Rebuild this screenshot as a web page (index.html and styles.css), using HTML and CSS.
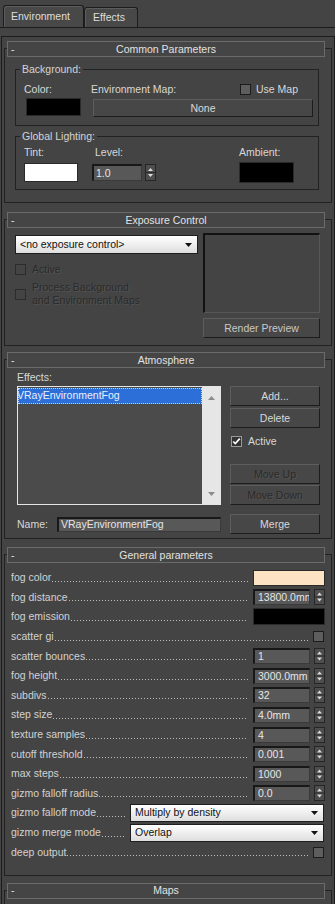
FILE: index.html
```html
<!DOCTYPE html>
<html lang="en">
<head>
<meta charset="utf-8">
<title>Environment and Effects</title>
<link rel="stylesheet" href="styles.css">
</head>
<body>
<div class="tabs">
  <div class="tab tab-env">Environment</div>
  <div class="tab tab-fx">Effects</div>
</div>
<div class="pane">

<section class="rollout ro-common">
  <div class="rhead"><span class="minus">-</span><span class="rtitle">Common Parameters</span></div>
  <div class="group g-bg">
    <div class="legend">Background:</div>
    <div class="bg-row1">
      <span class="lbl-color">Color:</span>
      <span class="lbl-env">Environment Map:</span>
      <span class="cb"></span><span class="lbl-use">Use Map</span>
    </div>
    <div class="bg-row2">
      <div class="swatch sw-black sw-bgcolor"></div>
      <div class="btn btn-none">None</div>
    </div>
  </div>
  <div class="group g-gl">
    <div class="legend">Global Lighting:</div>
    <div class="gl-row">
      <div class="gl-col gl-tint"><span class="gl-lbl">Tint:</span><div class="swatch sw-white"></div></div>
      <div class="gl-col gl-level"><span class="gl-lbl lbl-level">Level:</span>
        <div class="spinner sp-level"><div class="field">1.0</div>
          <svg class="arr" viewBox="0 0 11 17" width="11" height="17"><rect x="0.5" y="0.5" width="10" height="16" fill="#4e4e4e" stroke="#262626"/><path d="M3 7L5.5 4L8 7Z M3 10L5.5 13L8 10Z" fill="#dadada"/><path d="M1 8.5h9" stroke="#2a2a2a"/></svg>
        </div>
      </div>
      <div class="gl-col gl-amb"><span class="gl-lbl">Ambient:</span><div class="swatch sw-black sw-amb"></div></div>
    </div>
  </div>
</section>

<section class="rollout ro-exp">
  <div class="rhead"><span class="minus">-</span><span class="rtitle">Exposure Control</span></div>
  <div class="exp-body">
    <div class="exp-left">
      <div class="dropdown dd-exp"><span>&lt;no exposure control&gt;</span><svg width="7" height="4" viewBox="0 0 7 4"><path d="M0 0h7L3.5 4z" fill="#111"/></svg></div>
      <div class="chk-row exp-active"><span class="cb cb-dis"></span><span class="dis">Active</span></div>
      <div class="chk-row exp-proc"><span class="cb cb-dis"></span><span class="dis">Process Background<br>and Environment Maps</span></div>
    </div>
    <div class="exp-right">
      <div class="preview"></div>
      <div class="btn btn-render">Render Preview</div>
    </div>
  </div>
</section>

<section class="rollout ro-atm">
  <div class="rhead"><span class="minus">-</span><span class="rtitle">Atmosphere</span></div>
  <div class="atm-top">
    <div class="atm-left">
      <div class="lbl-effects">Effects:</div>
      <div class="listbox">
        <div class="list-items"><div class="sel">VRayEnvironmentFog</div></div>
        <div class="scroll">
          <svg width="7" height="4" viewBox="0 0 7 4"><path d="M0 4h7L3.5 0z" fill="#8c8c8c"/></svg>
          <svg width="7" height="4" viewBox="0 0 7 4"><path d="M0 0h7L3.5 4z" fill="#8c8c8c"/></svg>
        </div>
      </div>
    </div>
    <div class="atm-right">
      <div class="btn btn-add">Add...</div>
      <div class="btn btn-del">Delete</div>
      <div class="chk-row atm-active"><span class="cb cb-on"><svg viewBox="0 0 11 11" width="9" height="9"><path d="M1.5 5.5l2.5 2.5L9.5 2" stroke="#fff" stroke-width="2" fill="none"/></svg></span><span>Active</span></div>
      <div class="btn dis btn-up">Move Up</div>
      <div class="btn dis btn-down">Move Down</div>
    </div>
  </div>
  <div class="atm-name">
    <span class="lbl-name">Name:</span>
    <div class="field fld-name">VRayEnvironmentFog</div>
    <div class="btn btn-merge">Merge</div>
  </div>
</section>

<section class="rollout ro-gen">
  <div class="rhead"><span class="minus">-</span><span class="rtitle">General parameters</span></div>
  <div class="prows">
    <div class="prow"><span>fog color</span><span class="dots"></span><div class="swatch sw-fog"></div></div>
    <div class="prow"><span>fog distance</span><span class="dots"></span>
      <div class="spinner sp-gen"><div class="field">13800.0mm</div><svg class="arr" viewBox="0 0 11 16" width="11" height="16"><rect x="0.5" y="0.5" width="10" height="15" fill="#4e4e4e" stroke="#262626"/><path d="M3 6.5L5.5 3.5L8 6.5Z M3 9.5L5.5 12.5L8 9.5Z" fill="#dadada"/><path d="M1 8h9" stroke="#2a2a2a"/></svg></div></div>
    <div class="prow"><span>fog emission</span><span class="dots"></span><div class="swatch sw-black sw-emis"></div></div>
    <div class="prow"><span>scatter gi</span><span class="dots"></span><span class="cb cb-gen"></span></div>
    <div class="prow"><span>scatter bounces</span><span class="dots"></span>
      <div class="spinner sp-gen"><div class="field">1</div><svg class="arr" viewBox="0 0 11 16" width="11" height="16"><rect x="0.5" y="0.5" width="10" height="15" fill="#4e4e4e" stroke="#262626"/><path d="M3 6.5L5.5 3.5L8 6.5Z M3 9.5L5.5 12.5L8 9.5Z" fill="#dadada"/><path d="M1 8h9" stroke="#2a2a2a"/></svg></div></div>
    <div class="prow"><span>fog height</span><span class="dots"></span>
      <div class="spinner sp-gen"><div class="field">3000.0mm</div><svg class="arr" viewBox="0 0 11 16" width="11" height="16"><rect x="0.5" y="0.5" width="10" height="15" fill="#4e4e4e" stroke="#262626"/><path d="M3 6.5L5.5 3.5L8 6.5Z M3 9.5L5.5 12.5L8 9.5Z" fill="#dadada"/><path d="M1 8h9" stroke="#2a2a2a"/></svg></div></div>
    <div class="prow"><span>subdivs</span><span class="dots"></span>
      <div class="spinner sp-gen"><div class="field">32</div><svg class="arr" viewBox="0 0 11 16" width="11" height="16"><rect x="0.5" y="0.5" width="10" height="15" fill="#4e4e4e" stroke="#262626"/><path d="M3 6.5L5.5 3.5L8 6.5Z M3 9.5L5.5 12.5L8 9.5Z" fill="#dadada"/><path d="M1 8h9" stroke="#2a2a2a"/></svg></div></div>
    <div class="prow"><span>step size</span><span class="dots"></span>
      <div class="spinner sp-gen"><div class="field">4.0mm</div><svg class="arr" viewBox="0 0 11 16" width="11" height="16"><rect x="0.5" y="0.5" width="10" height="15" fill="#4e4e4e" stroke="#262626"/><path d="M3 6.5L5.5 3.5L8 6.5Z M3 9.5L5.5 12.5L8 9.5Z" fill="#dadada"/><path d="M1 8h9" stroke="#2a2a2a"/></svg></div></div>
    <div class="prow"><span>texture samples</span><span class="dots"></span>
      <div class="spinner sp-gen"><div class="field">4</div><svg class="arr" viewBox="0 0 11 16" width="11" height="16"><rect x="0.5" y="0.5" width="10" height="15" fill="#4e4e4e" stroke="#262626"/><path d="M3 6.5L5.5 3.5L8 6.5Z M3 9.5L5.5 12.5L8 9.5Z" fill="#dadada"/><path d="M1 8h9" stroke="#2a2a2a"/></svg></div></div>
    <div class="prow"><span>cutoff threshold</span><span class="dots"></span>
      <div class="spinner sp-gen"><div class="field">0.001</div><svg class="arr" viewBox="0 0 11 16" width="11" height="16"><rect x="0.5" y="0.5" width="10" height="15" fill="#4e4e4e" stroke="#262626"/><path d="M3 6.5L5.5 3.5L8 6.5Z M3 9.5L5.5 12.5L8 9.5Z" fill="#dadada"/><path d="M1 8h9" stroke="#2a2a2a"/></svg></div></div>
    <div class="prow"><span>max steps</span><span class="dots"></span>
      <div class="spinner sp-gen"><div class="field">1000</div><svg class="arr" viewBox="0 0 11 16" width="11" height="16"><rect x="0.5" y="0.5" width="10" height="15" fill="#4e4e4e" stroke="#262626"/><path d="M3 6.5L5.5 3.5L8 6.5Z M3 9.5L5.5 12.5L8 9.5Z" fill="#dadada"/><path d="M1 8h9" stroke="#2a2a2a"/></svg></div></div>
    <div class="prow"><span>gizmo falloff radius</span><span class="dots"></span>
      <div class="spinner sp-gen"><div class="field">0.0</div><svg class="arr" viewBox="0 0 11 16" width="11" height="16"><rect x="0.5" y="0.5" width="10" height="15" fill="#4e4e4e" stroke="#262626"/><path d="M3 6.5L5.5 3.5L8 6.5Z M3 9.5L5.5 12.5L8 9.5Z" fill="#dadada"/><path d="M1 8h9" stroke="#2a2a2a"/></svg></div></div>
    <div class="prow"><span>gizmo falloff mode</span><span class="dots"></span>
      <div class="dropdown dd-gen"><span>Multiply by density</span><svg width="7" height="4" viewBox="0 0 7 4"><path d="M0 0h7L3.5 4z" fill="#111"/></svg></div></div>
    <div class="prow"><span>gizmo merge mode</span><span class="dots"></span>
      <div class="dropdown dd-gen"><span>Overlap</span><svg width="7" height="4" viewBox="0 0 7 4"><path d="M0 0h7L3.5 4z" fill="#111"/></svg></div></div>
    <div class="prow"><span>deep output</span><span class="dots"></span><span class="cb cb-gen"></span></div>
  </div>
</section>

<section class="rollout ro-maps">
  <div class="rhead"><span class="minus">-</span><span class="rtitle">Maps</span></div>
  <div class="maps-body"></div>
</section>

</div>
</body>
</html>
```
FILE: styles.css
```css
* { box-sizing: border-box; }
html, body { margin: 0; padding: 0; }
body {
  width: 335px;
  height: 904px;
  overflow: hidden;
  background: #444444;
  font-family: "Liberation Sans", Arial, sans-serif;
  font-size: 10.5px;
  line-height: 13px;
  color: #d8d8d8;
}

/* tabs */
.tabs {
  display: flex;
  align-items: flex-end;
  height: 28px;
  padding-left: 3px;
  border-bottom: 1px solid #1c1c1c;
}
.tab {
  display: flex;
  align-items: center;
  border: 1px solid #1c1c1c;
  border-bottom: 0;
  border-radius: 3px 3px 0 0;
  background: #484848;
  box-shadow: inset 1px 1px 0 #5c5c5c;
  color: #dedede;
}
.tab-env { width: 81px; height: 22px; padding-left: 7px; }
.tab-fx { width: 54px; height: 20px; padding-left: 8px; }

.pane {
  margin: 8px 0 0 1px;
  border-top: 1px solid #1c1c1c;
  border-left: 1px solid #1c1c1c;
  border-right: 1px solid #1c1c1c;
  height: 900px;
}

/* rollouts */
.rollout {
  width: 328px;
  margin-left: 2px;
  border: 1px solid #222222;
}
.ro-common { margin-top: 11px; padding-bottom: 12px; }
.ro-exp { margin-top: 16px; padding-bottom: 7px; }
.ro-atm { margin-top: 13px; padding-bottom: 4px; }
.ro-gen { margin-top: 15px; padding-bottom: 13px; }
.ro-maps { margin-top: 14px; }
.maps-body { height: 20px; }

.rhead {
  display: grid;
  margin: -8px 0 0 2px;
  width: 318px;
  height: 16px;
  border: 1px solid #6b6b6b;
  background: #454545;
  color: #e2e2e2;
}
.rhead > span { grid-area: 1 / 1; align-self: center; }
.minus { justify-self: start; padding-left: 3px; }
.rtitle { justify-self: center; }

/* group boxes */
.group {
  border: 1px solid #222222;
  margin: 0 12px 0 10px;
}
.legend {
  display: table;
  margin: -7px 0 0 4px;
  padding: 0 2px;
  background: #444444;
  line-height: 13px;
  color: #d4d4d4;
}
.g-bg { margin-top: 12px; padding-bottom: 8px; }
.g-gl { margin-top: 10px; padding-bottom: 6px; }

.bg-row1 {
  display: flex;
  align-items: center;
  height: 18px;
  margin-top: 4px;
  padding-left: 8px;
}
.lbl-color { width: 67px; }
.lbl-env { width: 149px; }
.lbl-use { margin-left: 5px; }
.bg-row2 {
  display: flex;
  align-items: flex-start;
  height: 19px;
  padding-left: 10px;
}

.swatch { flex: none; border: 1px solid #2a2a2a; }
.sw-black { background: #000000; }
.sw-white { background: #ffffff; }
.sw-bgcolor { width: 55px; height: 18px; }
.btn-none { width: 220px; height: 18px; margin: 1px 0 0 12px; }

.gl-row { display: flex; margin-top: 3px; padding-left: 8px; }
.gl-col { display: flex; flex-direction: column; }
.gl-tint { width: 54px; }
.gl-tint .swatch { width: 54px; height: 19px; margin-top: 4px; }
.gl-level { margin-left: 14px; }
.lbl-level { padding-left: 3px; }
.sp-level { margin-top: 5px; }
.sp-level .field { width: 50px; height: 17px; }
.gl-amb { margin-left: 83px; }
.sw-amb { width: 55px; height: 21px; margin-top: 3px; }

/* controls */
.btn {
  display: flex;
  align-items: center;
  justify-content: center;
  background: #474747;
  border: 1px solid;
  border-color: #5d5d5d #1c1c1c #1c1c1c #5d5d5d;
  color: #d8d8d8;
}
.dis { color: #2b2b2b; text-shadow: 1px 1px 0 #535353; }

.spinner { display: flex; align-items: flex-start; gap: 3px; }
.arr { display: block; flex: none; }
.field {
  display: flex;
  align-items: center;
  overflow: hidden;
  white-space: nowrap;
  padding-left: 2px;
  background: #585858;
  border-style: solid;
  border-width: 2px 1px 1px 2px;
  border-color: #181818 #3a3a3a #3a3a3a #181818;
  color: #e6e6e6;
}

.cb {
  flex: none;
  display: inline-flex;
  align-items: center;
  justify-content: center;
  width: 11px;
  height: 11px;
  border: 1px solid #1c1c1c;
  background: #5e5e5e;
}
.cb-dis { border-color: #2c2c2c; background: #444444; }
.cb-on { border-color: #9a9a9a; background: #333333; }

.dropdown {
  display: flex;
  align-items: center;
  justify-content: space-between;
  padding: 0 5px 0 4px;
  background: linear-gradient(#ffffff, #dedede);
  border: 1px solid #1e1e1e;
  color: #111111;
}
.dropdown svg { display: block; flex: none; }

/* exposure */
.exp-body { display: flex; padding-left: 10px; }
.exp-left { width: 183px; }
.dd-exp { margin-top: 7px; height: 19px; }
.chk-row { display: flex; align-items: center; gap: 6px; }
.exp-active { margin-top: 8px; height: 14px; }
.exp-proc { margin-top: 5px; }
.exp-right { width: 117px; margin-left: 5px; }
.preview {
  margin-top: 5px;
  height: 80px;
  border-style: solid;
  border-width: 2px 1px 1px 2px;
  border-color: #121212 #575757 #575757 #121212;
  background: #444444;
}
.btn-render { margin-top: 5px; height: 20px; color: #c8c8c8; }

/* atmosphere */
.atm-top { display: flex; padding-left: 12px; }
.atm-left { width: 204px; }
.lbl-effects { margin-top: 3px; }
.listbox {
  display: flex;
  margin-top: 2px;
  height: 119px;
  border: 1px solid #e4e4e4;
  background: #4b4b4b;
}
.list-items { flex: 1; overflow: hidden; }
.sel {
  margin-top: 1px;
  height: 16px;
  line-height: 14px;
  background: #2d6fd8;
  color: #e8efff;
  outline: 1px dotted #c8d6f0;
  outline-offset: -1px;
  text-indent: -1px;
  white-space: nowrap;
}
.scroll {
  flex: none;
  width: 18px;
  background: #e6e6e6;
  display: flex;
  flex-direction: column;
  justify-content: space-between;
  align-items: center;
  padding: 9px 0 8px;
}
.scroll svg { display: block; }
.atm-right { width: 90px; margin-left: 9px; }
.atm-right .btn { height: 20px; }
.btn-add { margin-top: 18px; }
.btn-del { margin-top: 2px; }
.atm-active { margin-top: 6px; height: 14px; padding-left: 1px; }
.btn-up { margin-top: 16px; }
.btn-down { margin-top: 1px; }
.atm-name { display: flex; align-items: center; margin-top: 9px; height: 20px; padding-left: 12px; }
.lbl-name { width: 40px; }
.fld-name { width: 164px; height: 15px; }
.btn-merge { width: 90px; height: 20px; margin-left: 9px; }

/* general parameters */
.prows { padding-top: 5px; }
.prow {
  display: flex;
  align-items: center;
  height: 19.6px;
  padding: 0 6px;
  color: #d2d2d2;
  white-space: nowrap;
}
.dots {
  flex: 1;
  height: 1px;
  margin: 7px 5px 0 1px;
  background: repeating-linear-gradient(90deg, #bdbdbd 0 1px, transparent 1px 3px);
}
.sw-fog { width: 72px; height: 16px; background: #fde3c3; }
.sw-emis { width: 72px; height: 17px; }
.sp-gen .field { width: 57px; height: 16px; padding-left: 3px; }
.sp-gen { gap: 4px; }
.cb-gen { margin-right: 1px; }
.dd-gen { width: 194px; height: 18px; margin-right: 1px; }
```
